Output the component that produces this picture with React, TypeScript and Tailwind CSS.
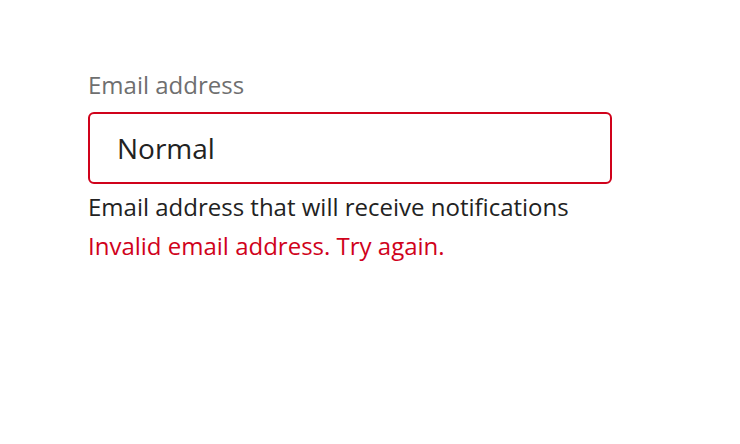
import React from 'react';

export default function App() {
  return (
    <div className="w-[740px] h-[444px] bg-white font-['Open_Sans',sans-serif]">
      <div className="pl-[88px] pt-[70px] w-[612px]">
        <label className="block text-[24px] leading-[30px] text-[#6f6f6f]">Email address</label>
        <div className="mt-[12px] h-[72px] rounded-[6px] border-2 border-[#d0021b] flex items-center pl-[27px] text-[28px] text-[#222]">
          Normal
        </div>
        <p className="mt-[8px] text-[24px] leading-[30px] text-[#222]">Email address that will receive notifications</p>
        <p className="mt-[9px] text-[24px] leading-[30px] text-[#d0021b]">Invalid email address. Try again.</p>
      </div>
    </div>
  );
}
